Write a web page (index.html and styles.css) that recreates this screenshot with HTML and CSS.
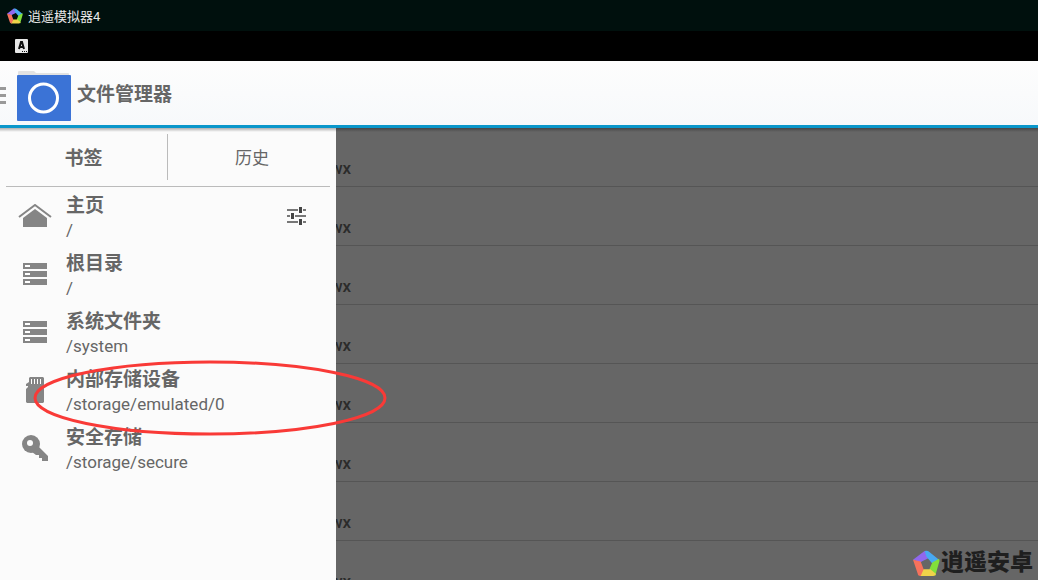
FILE: index.html
```html
<!DOCTYPE html>
<html lang="zh-CN">
<head>
  <meta charset="UTF-8" />
  <title>逍遥模拟器4</title>
  <link rel="stylesheet" href="styles.css">
</head>
<body>

<!-- Shared icon shapes -->
<svg class="defs" aria-hidden="true">
  <symbol id="logo" viewBox="0 0 28 28">
    <path fill="#9068ee" d="M0 10L12 1L17 8L9 12L8 13Z"/>
    <path fill="#48a9f2" d="M12 1Q15 0 17 2L27 10L20 14L14 7Z"/>
    <path fill="#82df3b" d="M27 9Q28 11 27 13L23 27L17 20L20 13Z"/>
    <path fill="#efd34a" d="M24 25Q23 27 21 27L7 27L10 20L18 20Z"/>
    <path fill="#f6725c" d="M8 27Q5 27 5 25L0 10L8 12L11 20Z"/>
  </symbol>
  <symbol id="drives" viewBox="0 0 24 22">
    <path fill="#858585" d="M0 0H24V6H0ZM0 8H24V14H0ZM0 16H24V22H0Z"/>
    <path fill="#fff" d="M2 2H7V4H2ZM2 10H7V12H2ZM2 18H7V20H2Z"/>
  </symbol>
</svg>

<!-- Emulator window title -->
<div class="titlebar">
  <svg class="title-logo"><use href="#logo"/></svg>
  <span>逍遥模拟器4</span>
</div>

<!-- Android status bar -->
<div class="statusbar">
  <svg width="13" height="14" viewBox="0 0 13 14">
    <rect width="13" height="14" rx="1" fill="#e8e8e8"/>
    <path fill="none" stroke="#111" stroke-width="2" d="M4 10L6 3H7L9 10M5 8H8"/>
    <path fill="#111" d="M7 12H8V13H7ZM9 12H10V13H9ZM11 12H12V13H11Z"/>
  </svg>
</div>

<!-- App header -->
<header class="header">
  <button class="menu" aria-label="菜单"><i></i><i></i><i></i></button>
  <svg class="app-icon" viewBox="0 0 54 50">
    <path fill="#e2e2e2" d="M1 1Q1 0 2 0H17L19 2H51Q52 2 52 3V6H1Z"/>
    <rect y="4" width="54" height="46" rx="1" fill="#3b73d6"/>
    <circle cx="26.500" cy="27" r="14" fill="none" stroke="#fff" stroke-width="3"/>
  </svg>
  <h1>文件管理器</h1>
</header>

<main class="main">
  <!-- File list behind the drawer -->
  <ul class="files">
    <li>wx</li>
    <li>wx</li>
    <li>wx</li>
    <li>wx</li>
    <li>wx</li>
    <li>wx</li>
    <li>wx</li>
    <li>wx</li>
  </ul>

  <!-- Drawer -->
  <nav class="drawer">
    <div class="tabs">
      <button class="active">书签</button>
      <button>历史</button>
    </div>
    <div class="item">
      <svg width="34" height="24" viewBox="0 0 34 24">
        <path fill="none" stroke="#858585" stroke-width="2" d="M1 13L17 1L33 13"/>
        <path fill="#858585" d="M5 14L17 5L29 14V23H5Z"/>
      </svg>
      <a href="#"><b>主页</b><span>/</span></a>
      <button class="settings" aria-label="设置">
        <svg width="20" height="20" viewBox="0 0 20 20">
          <path fill="none" stroke="#777" stroke-width="2" d="M0 4H11M16 4H19M0 10H3M8 10H19M0 16H11M16 16H19"/>
          <path fill="#444" d="M12 1H15V7H12ZM4 7H7V13H4ZM12 13H15V19H12Z"/>
        </svg>
      </button>
    </div>
    <div class="item">
      <svg width="24" height="22"><use href="#drives"/></svg>
      <a href="#"><b>根目录</b><span>/</span></a>
    </div>
    <div class="item">
      <svg width="24" height="22"><use href="#drives"/></svg>
      <a href="#"><b>系统文件夹</b><span>/system</span></a>
    </div>
    <div class="item">
      <svg width="18" height="26" viewBox="0 0 18 26">
        <path fill="#858585" d="M4 0H17L18 1V25L17 26H1L0 25V12L2 10V9H0V7L3 5V1Z"/>
        <path stroke="#fff" d="M5.500 2V7M8.500 2V7M11.500 2V7M14.500 2V7"/>
      </svg>
      <a href="#"><b>内部存储设备</b><span>/storage/emulated/0</span></a>
    </div>
    <div class="item">
      <svg width="26" height="26" viewBox="0 0 26 26">
        <circle cx="9" cy="9" r="9" fill="#858585"/>
        <path fill="#858585" d="M16 11L26 21V26H20V23H17V20H14L10 17Z"/>
        <circle cx="8" cy="8" r="3" fill="#fbfbfb"/>
      </svg>
      <a href="#"><b>安全存储</b><span>/storage/secure</span></a>
    </div>
  </nav>

  <!-- Red circle around the internal storage entry -->
  <svg class="mark" viewBox="0 0 354 76">
    <ellipse cx="177" cy="38" rx="175" ry="36"/>
  </svg>

  <div class="watermark">
    <svg><use href="#logo"/></svg>
    <span>逍遥安卓</span>
  </div>
</main>

</body>
</html>
```

FILE: styles.css
```css
* {
  box-sizing: border-box;
}
body {
  margin: 0;
  height: 100vh;
  display: flex;
  flex-direction: column;
  overflow: hidden;
  font-family: Roboto, "Noto Sans CJK SC", sans-serif;
  color: #666;
  background-color: #fbfbfb;
}
.defs {
  position: absolute;
  width: 0;
  height: 0;
}
button {
  border: none;
  padding: 0;
  background: none;
  font-family: inherit;
  color: inherit;
}
.titlebar {
  display: flex;
  align-items: center;
  gap: 5px;
  height: 31px;
  padding-left: 7px;
  font-size: 13px;
  color: #e8e8e8;
  background-color: #00100d;
}
.title-logo {
  width: 16px;
  height: 16px;
}
.statusbar {
  display: flex;
  align-items: center;
  height: 30px;
  padding-left: 15px;
  background-color: #000;
}
.header {
  display: flex;
  align-items: center;
  height: 67px;
  border-bottom: 3px solid #0a97cb;
  background: linear-gradient(#fdfdfd, #f7f9fb);
}
.menu {
  display: flex;
  flex-direction: column;
  gap: 4px;
  width: 17px;
  margin-top: 4px;
}
.menu i {
  width: 6px;
  height: 3px;
  background-color: #999;
}
.app-icon {
  width: 54px;
  height: 50px;
  margin-top: 6px;
}
.header h1 {
  margin: 0 0 1px 6px;
  font-size: 19px;
  font-weight: 700;
}
.main {
  position: relative;
  flex: 1;
  min-height: 0;
  overflow: hidden;
  background-color: #666;
}
.files {
  margin: 0;
  padding: 0;
  list-style: none;
}
.files li {
  height: 59px;
  padding: 30px 0 0 330px;
  border-bottom: 1px solid #555;
  font-size: 17px;
  line-height: 20px;
  font-weight: 500;
  color: #2b2b2b;
}
.drawer {
  position: absolute;
  top: 0;
  left: 0;
  bottom: 0;
  width: 336px;
  background-color: #fbfbfb;
}
.main::before {
  content: "";
  position: absolute;
  top: 0;
  left: 0;
  right: 0;
  z-index: 1;
  height: 4px;
  background: linear-gradient(rgba(0, 0, 0, 0.3), transparent);
}
.tabs {
  display: grid;
  grid-template-columns: 1fr 1fr;
  height: 59px;
  margin: 0 6px;
  padding: 6px 0;
  border-bottom: 1px solid #bbb;
}
.tabs button {
  padding: 0 0 2px 6px;
  font-size: 17px;
}
.tabs .active {
  padding: 0 6px 2px 0;
  border-right: 1px solid #bbb;
  font-size: 19px;
  font-weight: 700;
}
.item {
  display: grid;
  grid-template-columns: 66px 1fr 78px;
  align-items: center;
  height: 58px;
}
.item > svg {
  justify-self: center;
  margin-left: 4px;
}
.item a {
  display: flex;
  flex-direction: column;
  padding-top: 3px;
  font-size: 17px;
  line-height: 25px;
  color: #666;
  text-decoration: none;
}
.item b {
  font-size: 19px;
}
.settings {
  height: 20px;
  text-align: center;
}
.mark {
  position: absolute;
  top: 232px;
  left: 33px;
  width: 354px;
  height: 76px;
  fill: none;
  stroke: #f93a37;
  stroke-width: 3px;
}
.watermark {
  position: absolute;
  right: 5px;
  bottom: 0;
  display: flex;
  align-items: center;
  gap: 1px;
  font-size: 23px;
  line-height: 34px;
  font-weight: 900;
  color: #1f1f1f;
}
.watermark svg {
  width: 27px;
  height: 27px;
}
```
